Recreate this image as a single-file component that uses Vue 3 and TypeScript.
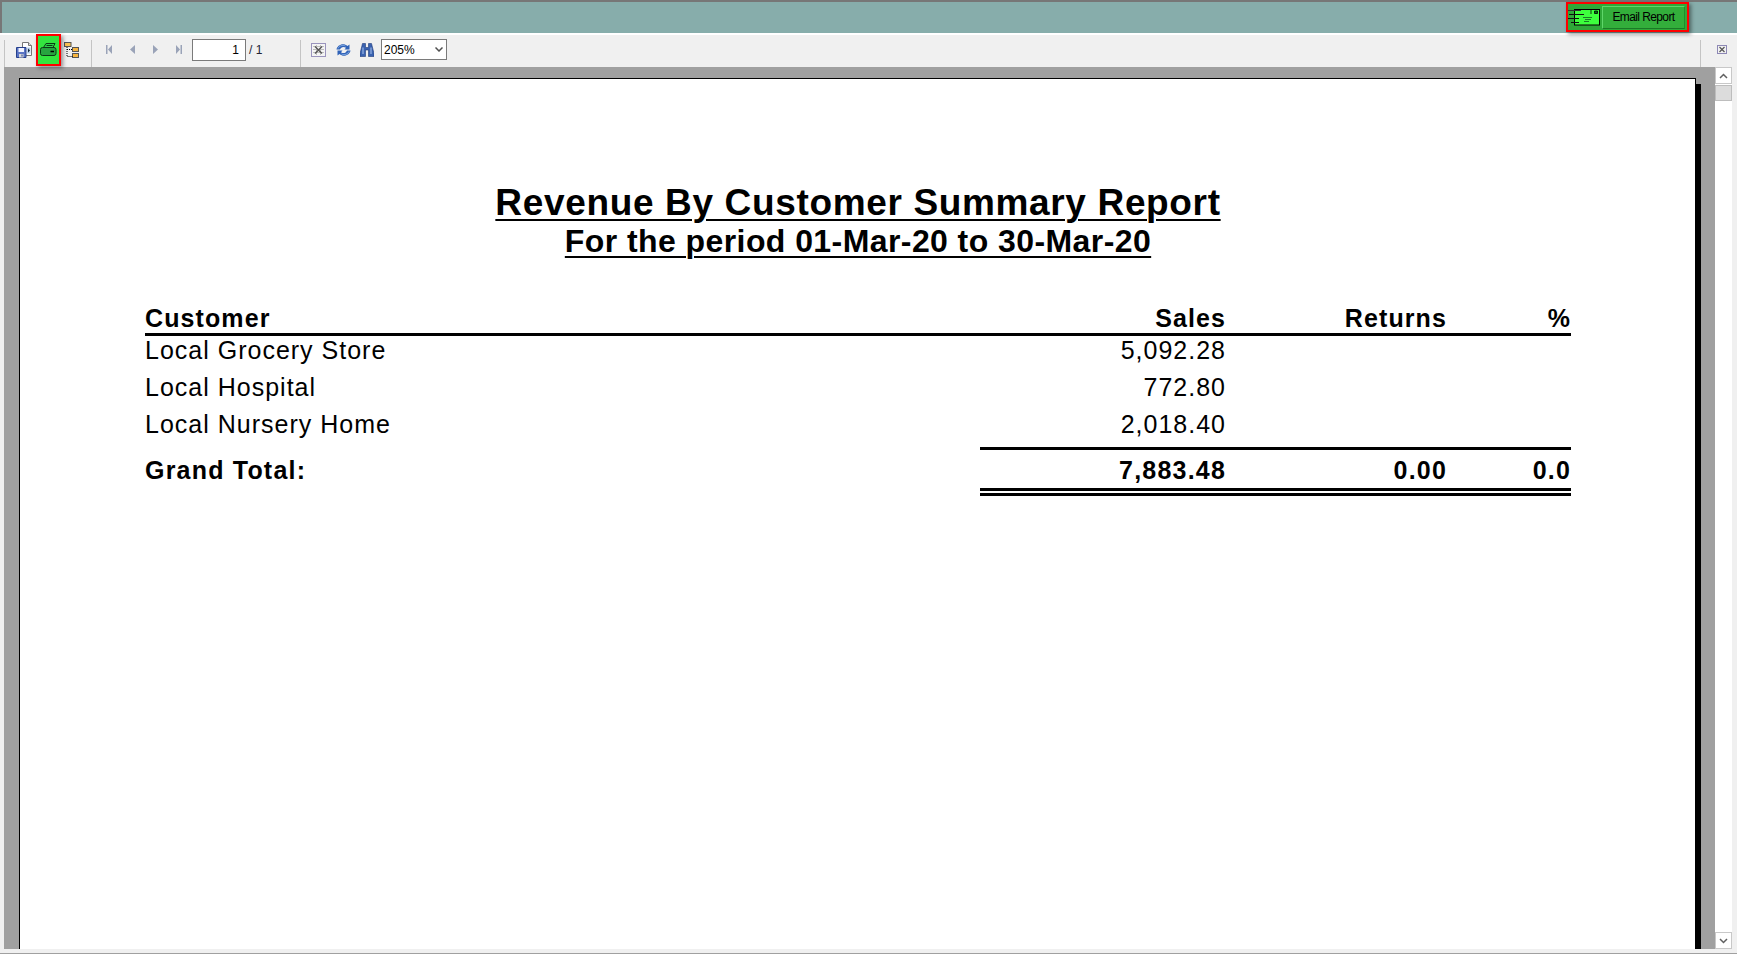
<script setup lang="ts">
interface Row { name: string; sales: string }
const rows: Row[] = [
  { name: 'Local Grocery Store', sales: '5,092.28' },
  { name: 'Local Hospital', sales: '772.80' },
  { name: 'Local Nursery Home', sales: '2,018.40' },
]
</script>

<template>
  <div class="window">
    <header class="topbar">
      <div class="email-group">
        <svg class="mail-icon" width="32" height="17" viewBox="0 0 32 17">
          <rect x="6.500" y="0.500" width="25" height="15.500" fill="#3dff3d" stroke="#000" />
          <path d="M0 1.500h9M9 1.500h4" stroke="#333" fill="none" />
          <path d="M1 5.500h15M0 9.500h11M3 13.500h8" stroke="#111" fill="none" />
          <path d="M26.500 2h3v2.500h-3zM22 2h2M22 4h2" stroke="#000" fill="#0b6b1a" stroke-width="0.800" />
          <path d="M15 8.500h9M17 10.500h6M16 12.500h5" stroke="#1a7a28" fill="none" />
        </svg>
        <button class="email-btn">Email Report</button>
      </div>
    </header>

    <nav class="toolbar">
      <div class="tool-left">
        <span class="sep"></span>
        <svg class="ico save" width="16" height="16" viewBox="0 0 16 16">
          <path d="M6.500 0.500h6l3 3v10h-9z" fill="#fff" stroke="#777" />
          <path d="M12.500 0.500v3h3" fill="#ddd" stroke="#777" />
          <path d="M11 5.500h3.500v6H11z" fill="#bcd4ee" />
          <path d="M12 6.500l2 2-2 2z" fill="#123" />
          <path d="M0.500 5.500h9.500v10H0.500z" fill="#5a74c4" stroke="#26408c" />
          <rect x="2.500" y="6" width="5.500" height="4" fill="#f2f4ff" />
          <rect x="3" y="12" width="4.500" height="3.500" fill="#d8d8d8" />
          <rect x="5.500" y="12.500" width="1" height="2" fill="#26408c" />
        </svg>
        <span class="print-box">
          <svg width="17" height="13" viewBox="0 0 17 13">
            <path d="M3.500 4.500l2.500-4h9l-2 4" fill="#2ed24a" stroke="#0c3a15" />
            <path d="M6.500 2.500h6" stroke="#0c3a15" />
            <rect x="0.500" y="4.500" width="15.500" height="8" rx="2" fill="#27a53f" stroke="#0c3a15" />
            <path d="M10.500 8.500h3.500" stroke="#000" stroke-width="1.500" />
          </svg>
        </span>
        <svg class="ico tree" width="15" height="16" viewBox="0 0 15 16">
          <rect x="0.500" y="0.500" width="6.500" height="4" fill="#f7c354" stroke="#555" />
          <rect x="8.500" y="5.500" width="6" height="4" fill="#f7b53f" stroke="#555" />
          <rect x="8.500" y="11.500" width="6" height="4" fill="#f7b53f" stroke="#555" />
          <path d="M3 5v9.500h5.500M3 7.500h5.500" stroke="#000" stroke-dasharray="1 1" fill="none" />
        </svg>
        <span class="sep gap-nav"></span>
        <div class="nav-icons">
          <svg width="6" height="9" viewBox="0 0 6 9"><path d="M0 0h1.500v9H0zM6 0v9L2 4.500z" fill="#9aa3b8" /></svg>
          <svg width="5" height="9" viewBox="0 0 5 9"><path d="M5 0v9L0 4.500z" fill="#9aa3b8" /></svg>
          <svg width="5" height="9" viewBox="0 0 5 9"><path d="M0 0v9l5-4.500z" fill="#9aa3b8" /></svg>
          <svg width="6" height="9" viewBox="0 0 6 9"><path d="M6 0H4.500v9H6zM0 0v9l4-4.500z" fill="#9aa3b8" /></svg>
        </div>
        <input class="page-input" value="1" />
        <span class="page-of">/ 1</span>
        <span class="sep gap-close"></span>
        <svg class="ico" width="15" height="14" viewBox="0 0 15 14">
          <rect x="0.500" y="0.500" width="14" height="13" fill="#f4f4f4" stroke="#9a94bd" />
          <path d="M2 3.500h11M2 6.500h11M2 9.500h11M5.500 2v10M9.500 2v10" stroke="#bcbcbc" />
          <path d="M4 3.500l7 7M11 3.500l-7 7" stroke="#555" stroke-width="1.400" />
        </svg>
        <svg class="ico refresh" width="15" height="14" viewBox="0 0 15 14">
          <path d="M0.500 6.500C1 2.500 7 -1 11.500 3L13.500 1.500V6.500H8.500L10 4.800C7.500 3 5 4 4 6.500z" fill="#2f62b8" />
          <path d="M14.500 7.500C14 11.500 8 15 3.500 11L1.500 12.500V7.500H6.500L5 9.200C7.500 11 10 10 11 7.500z" fill="#2f62b8" />
          <path d="M2 5.500C3 3 6.500 1.500 9.500 3M13 8.500C12 11 8.500 12.500 5.500 11" stroke="#9cc0ee" fill="none" stroke-width="0.700" />
        </svg>
        <svg class="ico binoc" width="14" height="14" viewBox="0 0 14 14">
          <path d="M2.500 0.500h3v4h3v-4h3L14 10.500v3H8.500V7h-3v6.500H0v-3z" fill="#3a62b0" stroke="#1f3a78" stroke-width="0.600" />
          <path d="M3 4.500v6.500M11 4.500v6.500" stroke="#a9c4ee" />
        </svg>
        <div class="zoom-wrap">
          <select class="zoom-select">
            <option>205%</option>
          </select>
          <svg class="chev" width="8" height="5" viewBox="0 0 8 5"><path d="M0.500 0.500L4 4l3.500-3.500" fill="none" stroke="#505050" stroke-width="1.500" /></svg>
        </div>
      </div>
      <div class="tool-right">
        <span class="sep"></span>
        <svg class="close-ico" width="10" height="9" viewBox="0 0 10 9">
          <rect x="0.500" y="0.500" width="9" height="8" fill="#f2f2f2" stroke="#8d88b5" />
          <path d="M2.500 2l5 5M7.500 2l-5 5" stroke="#555" stroke-width="1.200" />
        </svg>
      </div>
    </nav>

    <main class="viewer">
      <div class="canvas">
        <article class="page">
          <h1 class="title">Revenue By Customer Summary Report</h1>
          <h2 class="subtitle">For the period 01-Mar-20 to 30-Mar-20</h2>

          <div class="table">
            <div class="row head">
              <span>Customer</span>
              <span class="num">Sales</span>
              <span class="num">Returns</span>
              <span class="num">%</span>
            </div>
            <div v-for="r in rows" :key="r.name" class="row body">
              <span>{{ r.name }}</span>
              <span class="num">{{ r.sales }}</span>
              <span></span>
              <span></span>
            </div>
            <div class="row total">
              <span>Grand Total:</span>
              <span class="num">7,883.48</span>
              <span class="num">0.00</span>
              <span class="num">0.0</span>
              <div class="rule-top"></div>
              <div class="rule-bottom"></div>
            </div>
          </div>
        </article>
        <div class="shadow"></div>
      </div>
      <aside class="scrollbar">
        <div class="sb-btn">
          <svg width="9" height="6" viewBox="0 0 9 6"><path d="M1 5l3.500-3.500L8 5" fill="none" stroke="#606060" stroke-width="1.500" /></svg>
        </div>
        <div class="sb-thumb"></div>
        <div class="sb-track"></div>
        <div class="sb-btn">
          <svg width="9" height="6" viewBox="0 0 9 6"><path d="M1 1l3.500 3.500L8 1" fill="none" stroke="#606060" stroke-width="1.500" /></svg>
        </div>
      </aside>
    </main>
  </div>
</template>

<style>
html, body { margin: 0; background: #f0f0f0; overflow: hidden; }
</style>

<style scoped>
.window {
  width: 1737px;
  height: 954px;
  display: flex;
  flex-direction: column;
  background: #f0f0f0;
  font-family: "Liberation Sans", Arial, sans-serif;
  color: #000;
  border-bottom: 1px solid #a0a0a0;
  box-sizing: border-box;
}
.topbar {
  height: 31px;
  flex: none;
  background: #87adab;
  border-top: 2px solid #777;
  border-left: 2px solid #777;
  display: flex;
  justify-content: flex-end;
  align-items: flex-start;
  padding-right: 48px;
  position: relative;
  z-index: 1;
}
.email-group {
  height: 30px;
  width: 123px;
  box-sizing: border-box;
  border: 2px solid #f00;
  background: #2fa838;
  box-shadow: 2px 2px 4px rgba(0, 0, 0, 0.45);
  display: flex;
  align-items: center;
  padding-left: 0;
}
.mail-icon { flex: none; margin: 1px 2px 0 0; }
.email-btn {
  width: 83px;
  height: 23px;
  padding: 0;
  margin-top: 0;
  border: 1px solid #1f8f2c;
  border-top-color: #5fd66a;
  border-left-color: #5fd66a;
  border-bottom-color: #1a7a26;
  background: #33ae3b;
  font: 12px "Liberation Sans", Arial, sans-serif;
  letter-spacing: -0.6px;
  color: #000;
}
.toolbar {
  margin-top: 2px;
  height: 32px;
  box-sizing: border-box;
  flex: none;
  display: flex;
  justify-content: space-between;
  align-items: center;
  padding: 0 5px 3px 4px;
  background: #f0f0f0;
  box-shadow: 0 -2px 0 #fff;
}
.tool-left, .tool-right { display: flex; align-items: center; height: 100%; }
.sep {
  width: 1px;
  height: 27px;
  background: #c4c4c4;
  flex: none;
  align-self: flex-end;
  margin-bottom: -3px;
}
.ico { flex: none; display: block; }
.save { margin-left: 11px; }
.print-box {
  width: 25px;
  height: 32px;
  box-sizing: border-box;
  border: 2px solid #f00;
  background: #33e53f;
  box-shadow: 2px 2px 4px rgba(0, 0, 0, 0.4);
  display: flex;
  align-items: center;
  justify-content: center;
  margin-left: 4px;
  margin-right: 3px;
  flex: none;
  position: relative;
  z-index: 2;
}
.gap-nav { margin-left: 12px; }
.nav-icons {
  display: flex;
  align-items: center;
  gap: 18px;
  margin-left: 14px;
}
.page-input {
  width: 54px;
  height: 22px;
  box-sizing: border-box;
  margin-left: 10px;
  padding: 0 6px 0 0;
  border: 1px solid #7a7a7a;
  background: #fff;
  text-align: right;
  font: 12px "Liberation Sans", Arial, sans-serif;
  color: #000;
  outline: none;
}
.page-of {
  margin-left: 3px;
  width: 51px;
  font-size: 12px;
  color: #223;
  flex: none;
}
.gap-close { margin-right: 10px; }
.refresh { margin-left: 10px; }
.binoc { margin-left: 9px; }
.zoom-wrap {
  position: relative;
  width: 66px;
  height: 21px;
  margin-left: 7px;
  flex: none;
}
.zoom-select {
  appearance: none;
  display: block;
  width: 100%;
  height: 100%;
  box-sizing: border-box;
  padding: 0 0 0 2px;
  border: 1px solid #7a7a7a;
  border-radius: 0;
  background: #fff;
  font: 12px "Liberation Sans", Arial, sans-serif;
  color: #000;
}
.chev {
  position: absolute;
  right: 4px;
  top: 8px;
  pointer-events: none;
}
.close-ico { margin-left: 16px; margin-right: 5px; flex: none; }
.viewer {
  flex: 1;
  min-height: 0;
  display: flex;
  padding: 0 5px 4px 4px;
}
.canvas {
  flex: 1;
  min-width: 0;
  background: #a0a0a0;
  padding: 11px 0 0 15px;
  display: flex;
  overflow: hidden;
}
.page {
  width: 1677px;
  flex: none;
  box-sizing: border-box;
  background: #fff;
  border: 1px solid #000;
  border-bottom: 0;
  padding: 104px 0 0 125px;
}
.shadow {
  width: 5px;
  margin-top: 6px;
  background: #000;
  flex: none;
}
.title, .subtitle {
  margin: 0;
  width: 1426px;
  text-align: center;
  font-weight: 700;
  text-decoration: underline;
  text-decoration-thickness: 2px;
  text-underline-offset: 4px;
}
.title {
  font-size: 37px;
  line-height: 40px;
  letter-spacing: 0.65px;
}
.subtitle {
  font-size: 32px;
  line-height: 36px;
  letter-spacing: 0.42px;
}
.table { margin-top: 45px; width: 1426px; }
.row {
  display: grid;
  grid-template-columns: 1fr 130px 221px 124px;
  font-size: 25px;
}
.num { text-align: right; }
.head {
  font-weight: 700;
  letter-spacing: 1.1px;
  line-height: 29px;
  border-bottom: 3px solid #000;
}
.body {
  height: 37px;
  line-height: 29px;
  letter-spacing: 1px;
}
.total {
  position: relative;
  padding: 8px 0 10px;
  font-weight: 700;
  letter-spacing: 1.2px;
  line-height: 31px;
}
.rule-top {
  position: absolute;
  top: 0;
  left: 835px;
  right: 0;
  height: 3px;
  background: #000;
}
.rule-bottom {
  position: absolute;
  bottom: 0;
  left: 835px;
  right: 0;
  height: 8px;
  border-top: 3px solid #000;
  border-bottom: 3px solid #000;
  box-sizing: border-box;
}
.scrollbar {
  width: 17px;
  flex: none;
  background: #fff;
  display: flex;
  flex-direction: column;
}
.sb-btn {
  height: 17px;
  flex: none;
  background: #fff;
  border: 1px solid #c8c8c8;
  box-sizing: border-box;
  display: flex;
  align-items: center;
  justify-content: center;
}
.sb-thumb {
  height: 16px;
  margin-top: 1px;
  flex: none;
  background: #dcdcdc;
  border: 1px solid #bdbdbd;
  box-sizing: border-box;
}
.sb-track { flex: 1; background: #fff; }
</style>
